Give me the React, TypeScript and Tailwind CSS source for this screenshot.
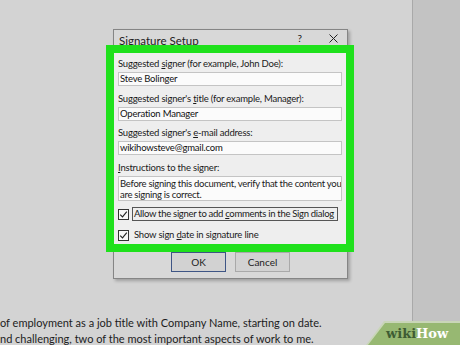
import React from "react";

const ui = { fontFamily: 'Lato, "Noto Sans", sans-serif' };

function Check() {
  return (
    <div className="w-[11px] h-[11px] border border-[#333] bg-[#f7f7f7] flex items-center justify-center shrink-0">
      <svg width="9" height="9" viewBox="0 0 9 9">
        <path d="M1.2 4.6 L3.5 6.9 L7.8 1.6" fill="none" stroke="#222" strokeWidth="1.1" />
      </svg>
    </div>
  );
}

function Field({ value }: { value: string }) {
  return (
    <div className="mt-[2px] h-[14px] bg-[#fbfbfb] border border-[#c4c4c4] px-[1px] flex items-center leading-none text-[#111] whitespace-nowrap overflow-hidden">
      <span>{value}</span>
    </div>
  );
}

export default function App() {
  return (
    <div className="w-[460px] h-[345px] bg-[#d3d3d3] flex overflow-hidden relative" style={ui}>
      <div className="w-[412px] flex flex-col">
        <div className="pt-[29px] pl-[113px]">
          <div className="w-[235px] h-[250px] border border-[#858585] bg-[#d8d8d8] shadow-[2px_2px_3px_rgba(0,0,0,0.25)] flex flex-col">
            <div className="h-[15px] flex items-end px-[5px] text-[11.5px] leading-none text-[#222] relative">
              <span className="relative top-[1px]">Signature Setup</span>
              <span className="ml-auto relative top-[-2px] mr-[27px] text-[10px]">?</span>
              <svg className="relative top-[-2px] mr-[4px]" width="9" height="9" viewBox="0 0 9 9">
                <path d="M0.5 0.5 L8.5 8.5 M8.5 0.5 L0.5 8.5" stroke="#222" strokeWidth="1" />
              </svg>
            </div>
            <div className="relative z-10 -ml-[8px] -mr-[7px] h-[207px] border-[8px] border-[#1fe11c] bg-[#eeeeee] px-[4px] pt-[5px] text-[9.5px] tracking-[-0.2px] text-[#1a1a1a]">
              <div className="h-[12px] leading-[12px] whitespace-nowrap">
                Suggested <span className="underline">s</span>igner (for example, John Doe):
              </div>
              <Field value="Steve Bolinger" />
              <div className="mt-[7px] h-[12px] leading-[12px] whitespace-nowrap">
                Suggested signer's <span className="underline">t</span>itle (for example, Manager):
              </div>
              <Field value="Operation Manager" />
              <div className="mt-[6px] h-[12px] leading-[12px] whitespace-nowrap">
                Suggested signer's <span className="underline">e</span>-mail address:
              </div>
              <Field value="wikihowsteve@gmail.com" />
              <div className="mt-[7px] h-[12px] leading-[12px] whitespace-nowrap">
                <span className="underline">I</span>nstructions to the signer:
              </div>
              <div className="mt-[2px] h-[25px] bg-[#fbfbfb] border border-[#c4c4c4] px-[1px] pt-[1px] leading-[11.3px] tracking-[-0.27px] whitespace-nowrap overflow-hidden">
                <div>Before signing this document, verify that the content you</div>
                <div>are signing is correct.</div>
              </div>
              <div className="mt-[7px] h-[12px] flex items-center">
                <Check />
                <div className="ml-[3px] h-[14px] w-[206px] border border-[#555] px-[1px] flex items-center whitespace-nowrap tracking-[-0.3px]">
                  <span>
                    Allow the signer to add <span className="underline">c</span>omments in the Sign dialog
                  </span>
                </div>
              </div>
              <div className="mt-[9px] h-[12px] flex items-center">
                <Check />
                <div className="ml-[5px] whitespace-nowrap">
                  <span>
                    Show sign <span className="underline">d</span>ate in signature line
                  </span>
                </div>
              </div>
            </div>
            <div className="flex pl-[57px] gap-[9px]">
              <div className="w-[55px] h-[20px] border border-[#3e5585] bg-[#d2d2d2] flex items-center justify-center text-[10px] text-[#222]">
                OK
              </div>
              <div className="w-[55px] h-[20px] border border-[#a9a9a9] bg-[#d2d2d2] flex items-center justify-center text-[10px] text-[#222]">
                Cancel
              </div>
            </div>
          </div>
        </div>
        <div
          className="mt-[36px] text-[11px] leading-[15.5px] text-[#1c1c1c] whitespace-nowrap"
          style={{ fontFamily: 'Lato, "Open Sans", sans-serif' }}
        >
          <div>of employment as a job title with Company Name, starting on date.</div>
          <div>nd challenging, two of the most important aspects of work to me.</div>
        </div>
      </div>
      <div className="flex-1 bg-[#c3c3c3] border-l border-[#a9a9a9]" />
      <div className="absolute left-[364px] top-[321px] w-[96px] h-[24px]">
        <svg className="absolute inset-0" width="96" height="24" viewBox="0 0 96 24">
          <polygon points="20,0 96,0 96,24 2,24" fill="#c9d6b8" />
          <polygon points="21,2 96,2 96,24 4,24" fill="#97b872" />
        </svg>
        <div
          className="absolute left-[22px] top-[5px] text-[13px] leading-[16px] font-bold whitespace-nowrap"
          style={{ fontFamily: '"DejaVu Serif", serif' }}
        >
          <span className="text-[#3e5c33]">wiki</span>
          <span className="text-white">How</span>
        </div>
      </div>
    </div>
  );
}
